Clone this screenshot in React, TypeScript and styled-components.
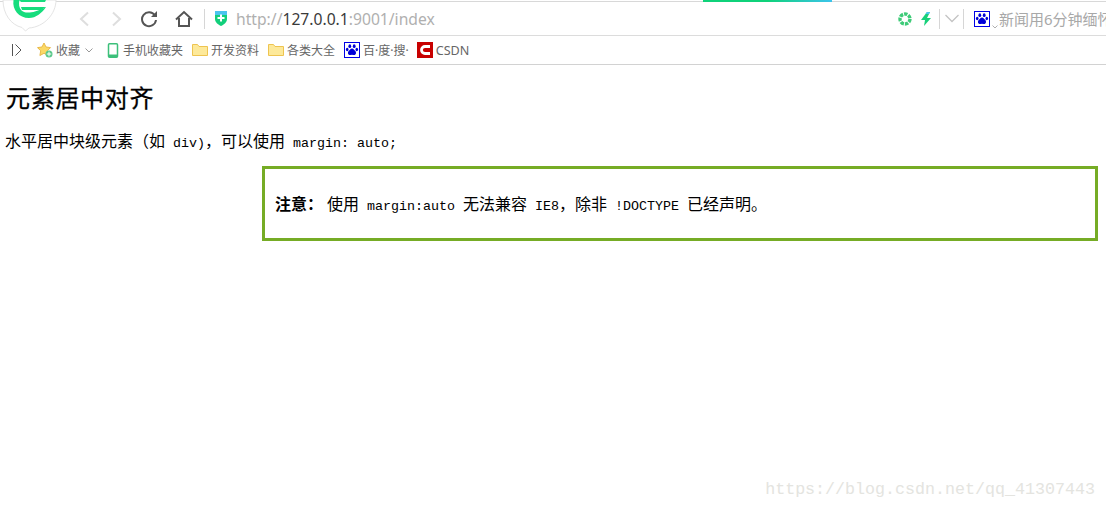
import React from "react";
import styled, { createGlobalStyle } from "styled-components";

const Global = createGlobalStyle`
  html, body { margin: 0; padding: 0; background: #fff; overflow: hidden; }
  body { font-family: "Liberation Serif", "Noto Sans CJK SC", serif; }
  #root { width: 1106px; height: 509px; }
`;

const Page = styled.div`
  position: relative;
  width: 1106px;
  height: 509px;
  overflow: hidden;
  color: #000;
`;

const TabStrip = styled.div`
  height: 2px;
  padding-left: 703px;
  background: linear-gradient(#fff 0 1px, #d8d8d8 1px 2px);
`;

const LoadBar = styled.div`
  width: 129px;
  height: 2px;
  background: linear-gradient(90deg, #0fd27a 0%, #0fd27a 50%, #3cc4ec 100%);
`;

const Toolbar = styled.div`
  display: flex;
  align-items: center;
  height: 33px;
  padding-left: 78px;
  border-bottom: 1px solid #dcdcdc;
  white-space: nowrap;
  overflow: hidden;
`;

const ToolIcon = styled.svg<{ $ml?: number }>`
  flex: none;
  display: block;
  margin-left: ${(p) => p.$ml ?? 0}px;
`;

const SmallCaret = styled(ToolIcon)`
  align-self: flex-end;
  margin-bottom: 6px;
`;

const Divider = styled.div<{ $ml: number }>`
  flex: none;
  width: 1px;
  height: 20px;
  margin-left: ${(p) => p.$ml}px;
  background: #d6d6d6;
`;

const Url = styled.div`
  flex: none;
  width: 655px;
  margin-left: 9px;
  font: 15.67px "Noto Sans", "Liberation Sans", sans-serif;
  color: #b0b0b0;
  b { font-weight: 400; color: #3a3a3a; }
`;

const NewsText = styled.div`
  flex: none;
  margin-left: 1px;
  font: 15px "Noto Sans", "Noto Sans CJK SC", sans-serif;
  color: #a8a8a8;
`;

const Bookmarks = styled.div`
  display: flex;
  align-items: center;
  height: 28px;
  padding-left: 11px;
  border-bottom: 1px solid #d2d2d2;
  white-space: nowrap;
`;

const Mark = styled.div<{ $ml: number; $gap?: number }>`
  display: flex;
  align-items: center;
  gap: ${(p) => p.$gap ?? 3}px;
  margin-left: ${(p) => p.$ml}px;
  font: 12px "Noto Sans", "Noto Sans CJK SC", sans-serif;
  color: #666;
`;

const CsdnLabel = styled.span`
  font: 12.6px "Noto Sans", "Liberation Sans", sans-serif;
  color: #666;
`;

const Logo = styled.svg`
  position: absolute;
  left: 0;
  top: 0;
`;

const Content = styled.main`
  padding-top: 18px;
`;

const Title = styled.h2`
  margin: 0 0 0 6px;
  height: 28px;
  font: 400 24px/28px "Noto Sans CJK SC", serif;
  letter-spacing: 0.7px;
  -webkit-text-stroke: 0.3px #000;
`;

const Lead = styled.p`
  margin: 20px 0 0 5px;
  height: 18px;
  font: 16px/18px "Noto Sans CJK SC", serif;
  white-space: pre;
`;

const Code = styled.span`
  font: 13.33px/18px "Liberation Mono", monospace;
  white-space: pre;
`;

const Note = styled.div`
  box-sizing: border-box;
  width: 836px;
  height: 75px;
  margin: 17px 0 0 262px;
  padding: 0 10px;
  border: 3px solid #76ac25;
  font: 16px/69px "Noto Sans CJK SC", serif;
  white-space: pre;
`;

const Strong = styled.strong`
  font-weight: 700;
  margin-right: 4px;
`;

const Watermark = styled.div`
  position: absolute;
  right: 11px;
  top: 480px;
  font: 16.67px/20px "Liberation Mono", monospace;
  color: #e4e4e0;
`;

const Folder = () => (
  <ToolIcon width="16" height="14" viewBox="0 0 16 14">
    <path d="M.5 12.5V1.500h5l1.500 2h8.500v9z" fill="#fde99a" stroke="#eec450" />
  </ToolIcon>
);

const Baidu = () => (
  <ToolIcon width="16" height="16" viewBox="0 0 16 16">
    <rect x=".5" y=".5" width="15" height="15" fill="#fff" stroke="#0000e6" />
    <g fill="#0000d8">
      <ellipse cx="5.800" cy="4.200" rx="1.400" ry="1.900" />
      <ellipse cx="10.200" cy="4.200" rx="1.400" ry="1.900" />
      <ellipse cx="3.200" cy="7.500" rx="1.300" ry="1.700" />
      <ellipse cx="12.800" cy="7.500" rx="1.300" ry="1.700" />
      <path d="M8 6.500c1.600 0 2.200 1.500 3.300 2.500 1.200 1.200 1 4-1.200 4-.9 0-1.300-.3-2.100-.3s-1.200.3-2.100.3c-2.200 0-2.400-2.800-1.200-4C5.800 8 6.400 6.500 8 6.500z" />
    </g>
  </ToolIcon>
);

export default function App() {
  return (
    <Page>
      <Global />
      <TabStrip>
        <LoadBar />
      </TabStrip>
      <Toolbar>
        <ToolIcon width="12" height="16" viewBox="0 0 12 16">
          <path d="M10 1.500 3 8l7 6.500" fill="none" stroke="#dedede" strokeWidth="2" />
        </ToolIcon>
        <ToolIcon $ml={21} width="12" height="16" viewBox="0 0 12 16">
          <path d="M2 1.500 9 8l-7 6.500" fill="none" stroke="#dedede" strokeWidth="2" />
        </ToolIcon>
        <ToolIcon $ml={17} width="18" height="18" viewBox="0 0 18 18">
          <path d="M14.800 5.200A7 7 0 1 0 16 10" fill="none" stroke="#555" strokeWidth="2" />
          <path d="M17 1v6h-6z" fill="#555" />
        </ToolIcon>
        <ToolIcon $ml={17} width="18" height="18" viewBox="0 0 18 18">
          <path d="M1 9.500 9 2l8 7.500M4 8v8h10V8" fill="none" stroke="#555" strokeWidth="2" />
        </ToolIcon>
        <Divider $ml={11} />
        <ToolIcon $ml={10} width="12" height="15" viewBox="0 0 12 15">
          <path d="M0 0h12v8c0 3.500-3 5.500-6 7-3-1.500-6-3.500-6-7z" fill="#12cf7b" />
          <path d="M0 0h12v4H0z" fill="#4cc3ee" />
          <path d="M5 3.500h2V6h2.500v2H7v2.500H5V8H2.500V6H5z" fill="#fff" />
        </ToolIcon>
        <Url>
          http://<b>127.0.0.1</b>:9001/index
        </Url>
        <ToolIcon $ml={7} width="14" height="14" viewBox="0 0 14 14">
          <circle cx="7" cy="7" r="5" fill="none" stroke="#3ecb78" strokeWidth="3.400" strokeDasharray="3.400 1" />
        </ToolIcon>
        <ToolIcon $ml={9} width="10" height="14" viewBox="0 0 10 14">
          <path d="M6 0 0 8h4l-1 6 7-8H6l3-6z" fill="#17d07a" />
          <path d="M6 0 4.500 2H8l1-2z" fill="#4cc3ee" />
        </ToolIcon>
        <Divider $ml={8} />
        <ToolIcon $ml={5} width="14" height="10" viewBox="0 0 14 10">
          <path d="M.5 1 7 7.500 13.500 1" fill="none" stroke="#c4c4c4" strokeWidth="1.300" />
        </ToolIcon>
        <Divider $ml={4} />
        <ToolIcon $ml={10} width="16" height="16" viewBox="0 0 16 16">
          <rect x=".5" y=".5" width="15" height="15" fill="#fff" stroke="#0000e6" />
          <g fill="#0000d8">
            <ellipse cx="5.800" cy="4.200" rx="1.400" ry="1.900" />
            <ellipse cx="10.200" cy="4.200" rx="1.400" ry="1.900" />
            <ellipse cx="3.200" cy="7.500" rx="1.300" ry="1.700" />
            <ellipse cx="12.800" cy="7.500" rx="1.300" ry="1.700" />
            <path d="M8 6.500c1.600 0 2.200 1.500 3.300 2.500 1.200 1.200 1 4-1.200 4-.9 0-1.300-.3-2.100-.3s-1.200.3-2.100.3c-2.200 0-2.400-2.800-1.200-4C5.800 8 6.400 6.500 8 6.500z" />
          </g>
        </ToolIcon>
        <SmallCaret $ml={2} width="6" height="4" viewBox="0 0 6 4">
          <path d="M.5.500 3 3 5.500.500" fill="none" stroke="#b0b0b0" />
        </SmallCaret>
        <NewsText>新闻用6分钟缅怀</NewsText>
      </Toolbar>
      <Bookmarks>
        <ToolIcon width="11" height="14" viewBox="0 0 11 14">
          <path d="M1.500 1v12" stroke="#555" strokeWidth="1" fill="none" />
          <path d="M4.500 1.500 10 7l-5.500 5.500" stroke="#555" strokeWidth="1" fill="none" />
        </ToolIcon>
        <Mark $ml={15}>
          <ToolIcon width="16" height="16" viewBox="0 0 16 16">
            <path d="M7 1 9 5l4.500.6-3.200 3.200.8 4.700L7 11.300 2.900 13.500l.8-4.700L.5 5.600 5 5z" fill="#fbd965" stroke="#e9b94a" strokeWidth="1" strokeLinejoin="round" />
            <circle cx="12" cy="12" r="3.500" fill="#5cc98b" />
            <path d="M11.500 9.800h1v1.700h1.700v1h-1.700v1.700h-1v-1.700H9.800v-1h1.700z" fill="#fff" />
          </ToolIcon>
          收藏
          <ToolIcon $ml={2} width="8" height="5" viewBox="0 0 8 5">
            <path d="M.5.500 4 4 7.500.500" fill="none" stroke="#999" />
          </ToolIcon>
        </Mark>
        <Mark $ml={14} $gap={4}>
          <ToolIcon width="12" height="15" viewBox="0 0 12 15">
            <rect x="1.500" y=".8" width="9" height="13.400" rx="1" fill="#fff" stroke="#3cc07a" strokeWidth="1.500" />
            <path d="M1 11.500h10V14H1z" fill="#3cc07a" />
          </ToolIcon>
          <span>手机收藏夹</span>
        </Mark>
        <Mark $ml={9}>
          <Folder />
          开发资料
        </Mark>
        <Mark $ml={9}>
          <Folder />
          各类大全
        </Mark>
        <Mark $ml={9}>
          <Baidu />
          百·度·搜·
        </Mark>
        <Mark $ml={8}>
          <ToolIcon width="16" height="16" viewBox="0 0 16 16">
            <rect width="16" height="16" fill="#c80000" />
            <path d="M13 4.500H8a3.500 3.500 0 0 0 0 7h5" fill="none" stroke="#fff" strokeWidth="2.800" />
          </ToolIcon>
          <CsdnLabel>CSDN</CsdnLabel>
        </Mark>
      </Bookmarks>
      <Logo width="60" height="34" viewBox="0 0 60 34">
        <path d="M3 0c0 14 8 25 19 27.500l3.500 3.500 3.500-3c15-1 27-14 27-28z" fill="#fff" stroke="#e4e4e4" />
        <path d="M19 0h27l-1 2H21z" fill="#16dd7d" />
        <path d="M21 7h25l-5 3H22z" fill="#16dd7d" />
        <path d="M13.500 0h6c-1 4-.5 8 2 10.500 3 3 11 3.500 24.500-3.500-4 6-10 11-17 11C19 18 12 10 13.500 0z" fill="#16dd7d" />
      </Logo>
      <Content>
        <Title>元素居中对齐</Title>
        <Lead>
          水平居中块级元素（如<Code> div)</Code>，可以使用<Code> margin: auto;</Code>
        </Lead>
        <Note>
          <Strong>注意：</Strong>使用<Code> margin:auto </Code>无法兼容<Code> IE8</Code>，除非<Code> !DOCTYPE </Code>已经声明。
        </Note>
      </Content>
      <Watermark>https://blog.csdn.net/qq_41307443</Watermark>
    </Page>
  );
}
